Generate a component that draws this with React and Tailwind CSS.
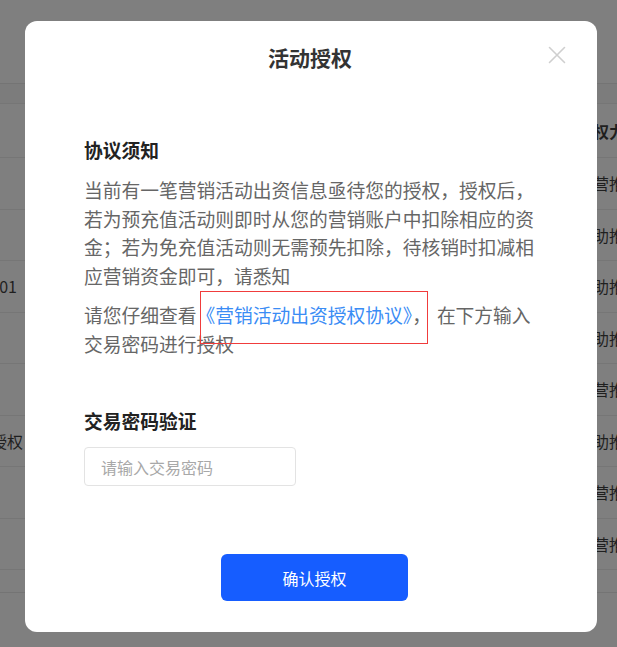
import React from 'react';

const rows = [
  { left: '', leftW: 'w-[17px]', right: '营推广' },
  { left: '', leftW: 'w-[17px]', right: '助推广' },
  { left: '20230100001', leftW: 'w-[17px]', right: '助推广' },
  { left: '', leftW: 'w-[17px]', right: '助推广' },
  { left: '', leftW: 'w-[17px]', right: '营推广' },
  { left: '活动授权', leftW: 'w-[23px]', right: '助推广' },
  { left: '', leftW: 'w-[17px]', right: '营推广' },
  { left: '', leftW: 'w-[17px]', right: '营推广' },
];

const App = () => {
  return (
    <div
      className="relative w-[617px] h-[647px] overflow-hidden bg-[#7f7f7f] text-[#1f1f1f]"
      style={{ fontFamily: '"Noto Sans CJK SC", "Noto Sans", sans-serif' }}
    >
      {/* page behind the mask */}
      <div className="flex flex-col">
        <div className="h-[84px] border-b border-[#747474]" />
        <div className="h-[20px] bg-[#7c7c7c] border-b border-[#767676]" />
        <div className="h-[54px] flex items-center justify-between border-b border-[#767676] text-[16px] font-bold">
          <div className="w-[16px]" />
          <div className="w-[25px] overflow-hidden whitespace-nowrap pl-[1px]">权力方</div>
        </div>
        {rows.map((row, index) => (
          <div
            key={index}
            className="h-[51.5px] flex items-center justify-between border-b border-[#767676] text-[16px]"
          >
            <div className={`${row.leftW} flex justify-end overflow-hidden whitespace-nowrap`}>{row.left}</div>
            <div className="w-[25px] overflow-hidden whitespace-nowrap pl-[1px]">{row.right}</div>
          </div>
        ))}
        <div className="h-[23px] border-b border-[#747474]" />
      </div>

      {/* modal */}
      <div className="absolute left-[25px] top-[21px] w-[572px] h-[611px] bg-white rounded-[12px] flex flex-col">
        <h2 className="pt-[22px] text-center text-[21px] leading-[28px] font-bold text-[#333] pr-[2px]">活动授权</h2>
        <button className="absolute right-[31px] top-[25px] w-[18px] h-[18px] flex items-center justify-center">
          <svg width="18" height="18" viewBox="0 0 18 18" fill="none" stroke="#cfcfcf" strokeWidth="1.6" strokeLinecap="round">
            <path d="M1.5 1.5L16.5 16.5M16.5 1.5L1.5 16.5" />
          </svg>
        </button>

        <div className="pl-[59px] pr-[57px] flex flex-col">
          <h3 className="mt-[65px] text-[18.75px] leading-[28px] font-bold text-[#222]">协议须知</h3>
          <p className="mt-[12px] text-[18.75px] leading-[28.5px] text-[#666]">
            当前有一笔营销活动出资信息亟待您的授权，授权后，若为预充值活动则即时从您的营销账户中扣除相应的资金；若为免充值活动则无需预先扣除，待核销时扣减相应营销资金即可，请悉知
          </p>
          <p className="relative mt-[11px] text-[18.75px] leading-[28.5px] text-[#666]">
            请您仔细查看<span className="text-[#3a8cf5]">《营销活动出资授权协议》</span>，<span className="ml-[6px]">在下方输入</span>交易密码进行授权
            <span className="absolute left-[116px] top-[-10px] w-[228px] h-[53px] border border-[#f03c3c] pointer-events-none" />
          </p>

          <h3 className="mt-[49px] text-[18.75px] leading-[28px] font-bold text-[#222]">交易密码验证</h3>
          <input
            type="password"
            placeholder="请输入交易密码"
            className="mt-[12px] w-[212px] h-[39px] border border-[#e3e3e3] rounded-[4px] px-[16px] text-[16px] placeholder:text-[#a8a8a8] outline-none"
          />

          <div className="mt-[68px] flex justify-center pl-[5px]">
            <button className="w-[187px] h-[47px] rounded-[6px] bg-[#165dff] text-white text-[16px]">确认授权</button>
          </div>
        </div>
      </div>
    </div>
  );
};

export default App;
